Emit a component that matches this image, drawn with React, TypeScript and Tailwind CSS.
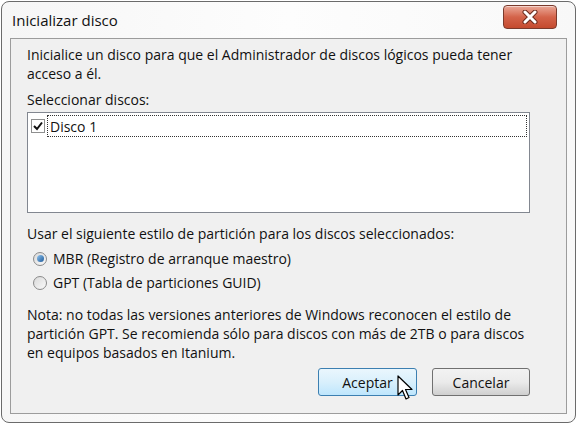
export default function App() {
  return (
    <div className="w-[577px] h-[424px] bg-white overflow-hidden relative" style={{ fontFamily: '"Open Sans", "Noto Sans", sans-serif' }}>
      <div className="w-[575px] h-[422px] ml-[1px] mt-[1px] rounded-[8px] border border-[#6b6b6b] bg-gradient-to-r from-[#f6f6f6] via-[#fdfdfd] to-[#f8f8f8] flex flex-col">
        {/* title bar */}
        <div className="h-[36px] flex items-start justify-between pl-[10px] pr-[18px]">
          <span className="mt-[7px] text-[15px] text-[#111]">Inicializar disco</span>
          <button className="mt-[3px] w-[54px] h-[24px] rounded-[4px] border border-[#7a3a2c] bg-gradient-to-b from-[#e9a898] via-[#d4634a] to-[#c44a2e] flex items-center justify-center shadow-[inset_0_1px_0_rgba(255,255,255,0.5)]">
            <svg width="18" height="14" viewBox="0 0 18 14">
              <path d="M4 2 L14 12 M14 2 L4 12" stroke="#6b2a1c" strokeWidth="5" strokeLinecap="round" />
              <path d="M4 2 L14 12 M14 2 L4 12" stroke="#ffffff" strokeWidth="3" strokeLinecap="round" />
            </svg>
          </button>
        </div>
        {/* client area */}
        <div className="mx-[8px] h-[376px] border border-[#9c9c9c] bg-[#f0f0f0] pl-[16px] pr-[36px] pt-[6px] text-[14px] leading-[19px] text-[#111] relative">
          <p>Inicialice un disco para que el Administrador de discos lógicos pueda tener acceso a él.</p>
          <p className="mt-[7px]">Seleccionar discos:</p>
          <div className="mt-[3px] h-[101px] border border-[#828790] bg-white p-[2px]">
            <div className="flex items-center h-[22px]">
              <div className="w-[14px] h-[14px] ml-[1px] border border-[#8e8f8f] bg-white flex items-center justify-center">
                <svg width="10" height="10" viewBox="0 0 10 10">
                  <path d="M1 5 L4 8 L9 1.5" stroke="#111" strokeWidth="2" fill="none" />
                </svg>
              </div>
              <div className="ml-[2px] flex-1 h-[22px] border border-dotted border-[#333] flex items-center pl-[2px]">Disco 1</div>
            </div>
          </div>
          <p className="mt-[11px]">Usar el siguiente estilo de partición para los discos seleccionados:</p>
          <div className="mt-[6px] flex flex-col gap-[5px] pl-[6px]">
            <div className="flex items-center gap-[6px]">
              <div className="w-[14px] h-[14px] rounded-full border border-[#8a8a8a] bg-gradient-to-br from-[#d9d9d9] to-[#fafafa] flex items-center justify-center">
                <div className="w-[7px] h-[7px] rounded-full bg-gradient-to-br from-[#8fc4ee] to-[#1b5a9a]" />
              </div>
              <span>MBR (Registro de arranque maestro)</span>
            </div>
            <div className="flex items-center gap-[6px]">
              <div className="w-[14px] h-[14px] rounded-full border border-[#8a8a8a] bg-gradient-to-br from-[#d9d9d9] to-[#fafafa]" />
              <span>GPT (Tabla de particiones GUID)</span>
            </div>
          </div>
          <p className="mt-[13px]">
            Nota: no todas las versiones anteriores de Windows reconocen el estilo de partición GPT. Se recomienda sólo para discos con más de 2TB o para discos en equipos basados en Itanium.
          </p>
          <div className="mt-[6px] flex justify-end gap-[15px]">
            <button className="w-[99px] h-[28px] rounded-[3px] border border-[#3c7fb1] bg-gradient-to-b from-[#eaf6fd] via-[#d9f0fc] to-[#bee6fd] text-[14px] text-[#111]">Aceptar</button>
            <button className="w-[98px] h-[28px] rounded-[3px] border border-[#707070] bg-gradient-to-b from-[#f2f2f2] via-[#ebebeb] to-[#cfcfcf] text-[14px] text-[#111]">Cancelar</button>
          </div>
        </div>
      </div>
      {/* mouse pointer */}
      <svg className="absolute left-[397px] top-[375px]" width="18" height="28" viewBox="0 0 18 28">
        <path d="M1 1 L1 20 L5.5 15.5 L9 24 L12 22.5 L8.5 14.5 L15 14.5 Z" fill="#ffffff" stroke="#000" strokeWidth="1.2" strokeLinejoin="round" />
      </svg>
    </div>
  );
}
